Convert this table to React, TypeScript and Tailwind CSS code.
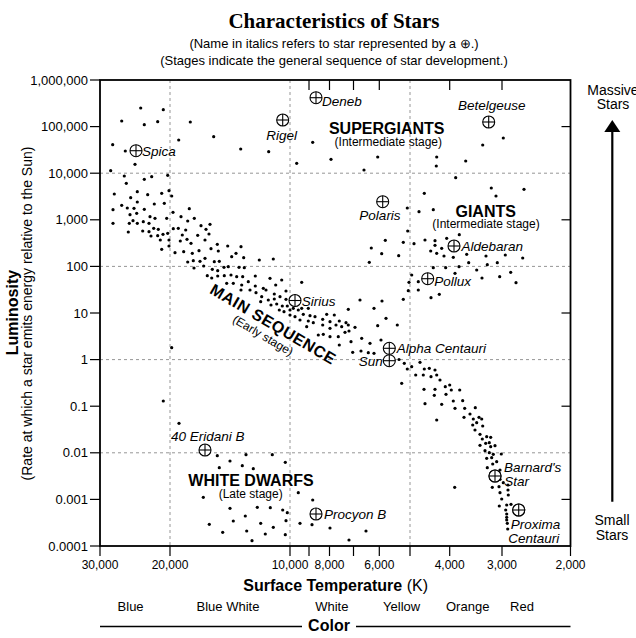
import React from "react";

// page coordinates: the svg's viewBox starts at y=70 so numbers below match the picture
const X_AT: Record<number, number> = {
  30000: 100, 20000: 170, 10000: 290, 9000: 309, 8000: 329.5, 7000: 353.5,
  6000: 379.3, 5000: 410, 4000: 449.7, 3000: 502, 2000: 570.5,
};
const yL = (exp: number) => 80 + (6 - exp) * 46.6;

const L = 100;
const R = 570.5;
const T = 80;
const B = 546;

const yLabels = ["1,000,000", "100,000", "10,000", "1,000", "100", "10", "1", "0.1", "0.01", "0.001", "0.0001"];
const xLabels: [number, string][] = [
  [30000, "30,000"], [20000, "20,000"], [10000, "10,000"], [8000, "8,000"],
  [6000, "6,000"], [4000, "4,000"], [3000, "3,000"], [2000, "2,000"],
];

const DOTS = `
140.7,108 163.3,109.7 121.7,121 144.3,124.7 157.7,121.7 190.3,122 178.7,140 213.7,136.7 240.7,149 268.7,151.7
112.7,144.7 125.3,151 296.7,163.3
135,164.3 110.7,170.7 124.3,176 126.3,183.3 144.3,179.3 151.7,176.7 167.7,175.3 114.3,194 130.7,197.7 137.3,191.7
147.7,194.7 161.7,193.3 169,190.7 171.7,196 137.3,202 154.3,204 164.3,203.3 121.7,205.3 127.3,208 134,208.3
144.3,209.3 113,209.7 130,214.7 136.7,213.3 150,216.7 155,218.3 166.7,218.3 173,212.3 189.3,208.7 181,216.7
187.7,221 194.3,218.3 113,223.3 129.3,223.3 133,220.7 137.3,223.3 143.3,221.7 149,223.3 128.3,232 142.7,231
149,231.7 153.7,228.3 158.3,229.3 151,236 157.7,235.7 163,234.3 167.7,233.3 173.3,228.7 178.3,228.3 185.7,230
182.3,235 197.7,235.3 201,225.7 206,229.3 210,224.3 209,234 160.3,240 169,240 180.3,241 187,239.3
191,243.3 205,240 161.7,249.3 169,246 175,252.7 183.7,251.7 192.3,253.3 199,250.7 211,248.7 218.3,251
217.3,244.3 227.7,246 241,246.7 236,253.3 231.7,256.7 243.7,257.7 187.7,262 193.3,260.7 194,268 200,261.3
205,258.3 203.7,266 212.3,269.3 214.3,261.7 219.3,261.3 217.7,270.7 224,267.3 228.3,266.7 231,275 239,267.3
244.3,267.7 207.3,275.7 211.7,278 217.7,276 224.3,275.7 236.7,276.7 242.7,276.7
259.3,260 273.3,259 255.3,276 270,278.3 281.7,280 226.7,283.3 233.3,283.3 241.7,285 248.3,281.7 255.3,286
263.3,288.3 275.7,285 241,290 250,290 256,292.7 266,290 274.3,294 286,291 261.7,296.7 268.3,300
274.3,299 280,296.7 286,299.3 260.7,301.7 271,305 276.7,304 282.3,306 287.3,306 293.3,308.3 279.3,310
284,311.7 290,310 298.3,310 290,315 295,316.7
301.7,282.3 301.7,308.3 308.3,308.3 303.3,314.3 310,315.7 315,316.7 326.7,314.3 334.3,315 300,320 308.3,321
313.3,322.7 322.7,319.3 330,321.7 339.3,321 346,322.7 306.7,326.7 322.7,325 330,328.3 336,325 341.7,326.7
348.3,325 355,327.3 318.3,335 323.3,334.3 330,336.7 338.3,336.7 345,332.3 349,331 339.3,345 351,341.7
361.7,338.3 370,343.3 381,340 352.7,352.3 361,351 368.3,352.7 374,353.3 348.3,309.3 360,300 374,308.3
382,301 386,318.3 377.7,325.7 397.3,325 399,359.5 404.3,363.3 407.3,369 411.7,366.7 420,362.3
424.3,369 429.3,368.3 435,370 415.7,375 423.3,375 431,376.7 436.7,375 401.7,383.3 440,380
312.7,142.3 331,159.3 377.7,157 364,170 436.7,157 436.3,166 465.7,161 482.7,145 503.3,138 455.7,177.7
424.3,193.3 491.3,188 496,196 524,189.3 407.3,208 419,211.7 433.3,209.7 407.7,231 385.3,240.3 371.3,248
381.7,253.7 369.3,262.3 398.7,255.7 403.3,242.3 414,243.7 425,240 435,240.7 435,245.3 430.7,251 436.7,253.3
441.7,248.3 446.7,238.3 459.3,234.7 444,256 453.3,257.3 466.7,254.3 486,256 505.3,255 522.7,258 468.7,262.7
476.7,270 487.3,264.7 497.3,262.7 433.3,267.7 445.7,267.7 459,266.7 455,273.3 482,278 499.7,276.7 510.7,272.3
516,282.7 411.7,275 409,282.3 418.3,281.7 408.3,290.7 418.3,290 431,297.7 439.3,294.3 403.3,299.3
445.3,386.7 449.7,385 451.3,390 459.7,390 424,389.3 435,389.3 434.3,395.3 446,394.3 453.3,401 462.7,400.7
425,403.7 441.7,404.3 455,408.3 464.7,408.3 475.3,407.7 470,414 464,417.3 473.3,419 479,417.3 481.7,419
436.7,420 472.7,425 476.7,422.7 482.7,426 475,430 480,434.3 486.7,436.7 490.7,437.3 482.3,439 485.7,443.3
489.3,442.7 480,445.3 490.7,446.7 495,445.7 485,450.7 489.3,452.7 493.3,454.3 501.3,454 486.7,458.3 491.7,457.7
496.7,461.7 487.3,467.7 492.7,464 500,470 500,479.3 503.3,482.7 492.3,487.3 499,486.7 508,485 500,492.7
508,490 508.3,495 501.7,499 506.7,505 511,504.3 499.3,506 505.7,510 506.7,514 506.7,517.3 506.7,520
507.3,523.3 507.7,529 454.7,487.3
171.7,347.7 163.3,401 179,423.3 217.3,455.7 246,454.7 272.3,454.7 219.3,467.7 230,461 242.3,465.7 253.3,468.7
285.3,462.3 203.3,497.3 298.3,492.7 230,508.3 257.3,507.3 270.3,507.7 282.7,510 287.3,512.7 209.3,524.3 233.3,521
245.3,516 260.7,523.3 273.3,527.3 286,520.7 300,523.3 222.7,532.3 246.7,531 265.3,534 285.3,534.7 252,540.7
312.7,500 312,524.7 330,528 349,540 366,531
`
  .trim()
  .split(/\s+/)
  .map((p) => p.split(",").map(Number));

// marked stars: circle-plus centre, label, label anchor
const STARS: { cx: number; cy: number; text: string; x: number; y: number; anchor?: "start" | "middle" | "end" }[] = [
  { cx: 316, cy: 97.7, text: "Deneb", x: 322, y: 105.7 },
  { cx: 282.7, cy: 120, text: "Rigel", x: 281.7, y: 139.7, anchor: "middle" },
  { cx: 488.7, cy: 122, text: "Betelgeuse", x: 491.7, y: 110.4, anchor: "middle" },
  { cx: 136, cy: 150.7, text: "Spica", x: 142, y: 156.4 },
  { cx: 382.7, cy: 201.7, text: "Polaris", x: 380, y: 219.7, anchor: "middle" },
  { cx: 454, cy: 246, text: "Aldebaran", x: 461.5, y: 251.4 },
  { cx: 427.7, cy: 278.7, text: "Pollux", x: 434.3, y: 285.7 },
  { cx: 295, cy: 300.5, text: "Sirius", x: 301.7, y: 306 },
  { cx: 389.3, cy: 348.3, text: "Alpha Centauri", x: 396.7, y: 353 },
  { cx: 389.3, cy: 360.7, text: "Sun", x: 382.7, y: 366.4, anchor: "end" },
  { cx: 205, cy: 450, text: "40 Eridani B", x: 171, y: 441.4 },
  { cx: 495, cy: 476, text: "Barnard's", x: 504, y: 472 },
  { cx: 495, cy: 476, text: "Star", x: 504.3, y: 486.4 },
  { cx: 518.7, cy: 510, text: "Proxima", x: 510.7, y: 529 },
  { cx: 518.7, cy: 510, text: "Centauri", x: 508.3, y: 543 },
  { cx: 316, cy: 514, text: "Procyon B", x: 324, y: 519 },
];

function CirclePlus({ cx, cy }: { cx: number; cy: number }) {
  return (
    <g stroke="#000" strokeWidth={1.1} fill="white">
      <circle cx={cx} cy={cy} r={6} />
      <line x1={cx - 6} y1={cy} x2={cx + 6} y2={cy} />
      <line x1={cx} y1={cy - 6} x2={cx} y2={cy + 6} />
    </g>
  );
}

function Chart() {
  const sans = "'Liberation Sans', Arial, sans-serif";
  return (
    <svg width={636} height={568} viewBox="0 70 636 568" className="block">
      <g fontFamily={sans} fill="#000">
        {/* dashed grid */}
        <g stroke="#8a8a8a" strokeWidth={0.9} strokeDasharray="3 3">
          {[20000, 10000, 5000].map((t) => (
            <line key={t} x1={X_AT[t]} y1={T} x2={X_AT[t]} y2={B} />
          ))}
          {[4, 2, 0, -2].map((e) => (
            <line key={e} x1={L} y1={yL(e)} x2={R} y2={yL(e)} />
          ))}
        </g>

        {/* ticks */}
        <g stroke="#000" strokeWidth={1.2}>
          {yLabels.map((_, i) => (
            <line key={"l" + i} x1={90} y1={yL(6 - i)} x2={L} y2={yL(6 - i)} />
          ))}
          {[5, 3, 1, -1, -3].map((e) => (
            <line key={"r" + e} x1={R - 9} y1={yL(e)} x2={R} y2={yL(e)} />
          ))}
          {Object.values(X_AT).map((x) => (
            <line key={"b" + x} x1={x} y1={B} x2={x} y2={B + 10} />
          ))}
          {[9000, 8000, 7000, 6000, 4000, 3000].map((t) => (
            <line key={"t" + t} x1={X_AT[t]} y1={T} x2={X_AT[t]} y2={T + 10} />
          ))}
        </g>

        {/* frame */}
        <rect x={L} y={T} width={R - L} height={B - T} fill="none" stroke="#000" strokeWidth={1.8} />

        {/* axis numbers */}
        <g fontSize={13} textAnchor="end">
          {yLabels.map((s, i) => (
            <text key={s} x={88} y={yL(6 - i) + 4.6}>
              {s}
            </text>
          ))}
        </g>
        <g fontSize={12} textAnchor="middle">
          {xLabels.map(([t, s]) => (
            <text key={s} x={X_AT[t]} y={568.5}>
              {s}
            </text>
          ))}
        </g>

        {/* stars */}
        {DOTS.map(([x, y], i) => (
          <circle key={i} cx={x} cy={y} r={1.6} />
        ))}

        {STARS.map((s, i) => (
          <g key={i}>
            <CirclePlus cx={s.cx} cy={s.cy} />
            <text x={s.x} y={s.y} fontSize={13.5} fontStyle="italic" textAnchor={s.anchor ?? "start"}>
              {s.text}
            </text>
          </g>
        ))}

        {/* region names */}
        <g textAnchor="middle">
          <text x={386.7} y={134.2} fontSize={16} fontWeight="bold">SUPERGIANTS</text>
          <text x={388.3} y={145.7} fontSize={12}>(Intermediate stage)</text>
          <text x={485.7} y={216.5} fontSize={16} fontWeight="bold">GIANTS</text>
          <text x={486} y={228.4} fontSize={12}>(Intermediate stage)</text>
          <text x={251} y={485.8} fontSize={16} fontWeight="bold">WHITE DWARFS</text>
          <text x={250.7} y={497.7} fontSize={12}>(Late stage)</text>
          <g transform="translate(270.4 328.9) rotate(30.5)">
            <text x={0} y={0} fontSize={16} fontWeight="bold" letterSpacing={0.6}>MAIN SEQUENCE</text>
            <text x={-3} y={13.5} fontSize={12}>(Early stage)</text>
          </g>
        </g>

        {/* axis titles */}
        <g textAnchor="middle">
          <text transform="translate(18.3 312.5) rotate(-90)" fontSize={16} fontWeight="bold">
            Luminosity
          </text>
          <text transform="translate(31.9 313.5) rotate(-90)" fontSize={14}>
            (Rate at which a star emits energy relative to the Sun)
          </text>
          <text x={335.7} y={591} fontSize={16}>
            <tspan fontWeight="bold">Surface Temperature</tspan> (K)
          </text>
        </g>

        {/* colour row */}
        <g textAnchor="middle" fontSize={13}>
          <text x={130.6} y={611.3}>Blue</text>
          <text x={228} y={611.3}>Blue White</text>
          <text x={331.8} y={611.3}>White</text>
          <text x={401.6} y={611.3}>Yellow</text>
          <text x={467.7} y={611.3}>Orange</text>
          <text x={522} y={611.3}>Red</text>
          <text x={329} y={631} fontSize={16} fontWeight="bold">Color</text>
        </g>
        <g stroke="#000" strokeWidth={1.4}>
          <line x1={L} y1={626.5} x2={302} y2={626.5} />
          <line x1={356} y1={626.5} x2={R} y2={626.5} />
        </g>

        {/* mass arrow */}
        <g textAnchor="middle" fontSize={14}>
          <text x={613} y={94.5}>Massive</text>
          <text x={613} y={109.3}>Stars</text>
          <text x={612} y={525}>Small</text>
          <text x={612} y={540}>Stars</text>
        </g>
        <polygon points="612.3,120 604.3,132 620.3,132" fill="#000" />
        <line x1={612.3} y1={130} x2={612.3} y2={501.7} stroke="#000" strokeWidth={2.2} />
      </g>
    </svg>
  );
}

export default function App() {
  return (
    <div className="w-[636px] h-[638px] bg-white overflow-hidden text-black">
      <div className="h-[70px] pt-[9px] pl-[32px] text-center">
        <h1 className="font-['Liberation_Serif',serif] font-bold text-[21px] leading-[24px]">
          Characteristics of Stars
        </h1>
        <p className="mt-[2px] font-['Liberation_Sans',Arial,sans-serif] text-[13px] leading-[17px]">
          (Name in italics refers to star represented by a ⊕.)
        </p>
        <p className="font-['Liberation_Sans',Arial,sans-serif] text-[13px] leading-[17px]">
          (Stages indicate the general sequence of star development.)
        </p>
      </div>
      <Chart />
    </div>
  );
}
